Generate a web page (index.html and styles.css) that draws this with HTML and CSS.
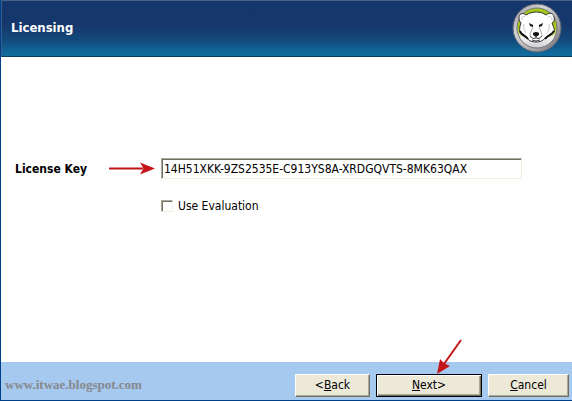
FILE: index.html
```html
<!DOCTYPE html>
<html lang="en">
<head>
    <meta charset="utf-8">
    <title>Licensing</title>
    <link rel="stylesheet" href="styles.css">
</head>
<body>
<form class="wizard">
    <header class="header">
        <h1 class="title">Licensing</h1>
        <svg class="logo" viewBox="0 0 50 50" aria-hidden="true">
            <defs>
                <linearGradient id="ring" x1="0" y1="0" x2="1" y2="1">
                    <stop offset="0" stop-color="#98969c"/>
                    <stop offset=".35" stop-color="#d4d3d6"/>
                    <stop offset=".7" stop-color="#a4a2a6"/>
                    <stop offset="1" stop-color="#67646a"/>
                </linearGradient>
                <linearGradient id="plate" x1="0" y1="0" x2="0" y2="1">
                    <stop offset=".5" stop-color="#a4c814"/>
                    <stop offset=".64" stop-color="#c8d878"/>
                    <stop offset=".74" stop-color="#f2f2f4"/>
                    <stop offset="1" stop-color="#cfcfd3"/>
                </linearGradient>
            </defs>
            <circle cx="25" cy="25" r="24" fill="url(#ring)" stroke="#5f6478" stroke-width="1"/>
            <circle cx="25" cy="25" r="20" fill="url(#plate)" stroke="#77777b" stroke-width="1"/>
            <!-- head -->
            <path d="M14 12 C10 9 7 11 7 15 C7 17 8 19 9 20 C8 23 7 26 8 29 C9 32 12 33 15 35 C17 38 20 39 24 39 C28 39 31 38 33 35 C36 33 40 32 42 29 C43 26 41 23 40 20 C42 19 43 17 42 14 C41 10 38 9 34 12 C29 8 20 8 14 12 Z" fill="#fff" stroke="#333" stroke-width="1"/>
            <path d="M8 28 C9 32 13 32 16 36 M42 28 C40 32 36 32 33 36" fill="none" stroke="#111" stroke-width="2"/>
            <path d="M10 17 C9 14 11 13 13 14 M40 17 C40 14 38 13 36 14 M12 21 C11 24 12 27 14 30 M37 21 C38 24 37 27 35 30" fill="none" stroke="#c4c4c9" stroke-width="1"/>
            <!-- eyes and muzzle -->
            <path d="M17 20 L21 22 L21 24 L18 23 Z M31 20 L27 22 L27 24 L30 23 Z" fill="#111"/>
            <path d="M21 24 C20 27 18 29 18 33 M27 24 C28 27 30 29 30 33" fill="none" stroke="#aaa" stroke-width="1"/>
            <path d="M21 30 Q24 28 27 30 L27 32 L24 34 L21 32 Z" fill="#151515"/>
            <path d="M24 33 V35 M18 33 Q21 37 24 35 Q27 37 30 33 M20 37 Q24 39 28 37" fill="none" stroke="#444" stroke-width="1"/>
        </svg>
    </header>

    <main class="content">
        <div class="key-cell">
            <label class="key-label" for="key">License Key</label>
            <svg class="arrow" viewBox="0 0 46 13" aria-hidden="true">
                <path d="M0 6.5 H34" stroke="#c4161a" stroke-width="2"/>
                <path d="M46 6.5 L31 0.5 L34.5 6.5 L31 12.5 Z" fill="#c4161a"/>
            </svg>
        </div>
        <input class="key-input" id="key" type="text" value="14H51XKK-9ZS2535E-C913YS8A-XRDGQVTS-8MK63QAX">
        <div class="evaluation">
            <input class="check" id="evaluation" type="checkbox">
            <label for="evaluation">Use Evaluation</label>
        </div>
    </main>

    <footer class="footer">
        <a class="site" href="#">www.itwae.blogspot.com</a>
        <div class="buttons">
            <button class="btn" type="button">&lt;<u>B</u>ack</button>
            <div class="next">
                <button class="btn btn-default" type="button"><u>N</u>ext&gt;</button>
                <svg class="pointer" viewBox="0 0 28 36" aria-hidden="true">
                    <path d="M25 1 L8 25" stroke="#c4161a" stroke-width="2"/>
                    <path d="M1 35 L4 20 L8.5 24.5 L14 27 Z" fill="#c4161a"/>
                </svg>
            </div>
            <button class="btn btn-cancel" type="button"><u>C</u>ancel</button>
        </div>
    </footer>
</form>
</body>
</html>
```
FILE: styles.css
```css
*{
    box-sizing: border-box;
}
body{
    margin: 0;
    font-family: "DejaVu Sans Condensed", "DejaVu Sans", sans-serif;
    font-size: 12px;
    color: #000;
}
.wizard{
    display: flex;
    flex-direction: column;
    min-height: 100vh;
    background-color: #fff;
    border-left: 1px solid #00408a;
    border-bottom: 1px solid #00408a;
}

/* top banner */
.header{
    display: flex;
    align-items: center;
    justify-content: space-between;
    height: 57px;
    padding: 0 10px 2px 9px;
    background: linear-gradient(#15366a 0%, #15386c 45%, #13497c 70%, #106b9c 96%);
    border-top: 1px solid #4a6289;
    border-left: 1px solid #395b88;
    border-bottom: 1px solid #0b3c5c;
}
.title{
    margin: 0;
    font-size: 13px;
    font-weight: bold;
    color: #fff;
}
.logo{
    width: 50px;
    height: 50px;
}

/* licence form */
.content{
    flex: 1;
    display: grid;
    grid-template-columns: 146px 1fr;
    align-content: start;
    row-gap: 20px;
    padding: 101px 50px 20px 14px;
}
.key-cell{
    display: flex;
    align-items: center;
    justify-content: space-between;
    padding-right: 6px;
}
.key-label{
    font-weight: bold;
}
.arrow{
    width: 46px;
    height: 13px;
}
.key-input{
    width: 100%;
    height: 21px;
    padding: 0 2px;
    font: inherit;
    color: #000;
    background-color: #fff;
    border: 1px solid;
    border-color: #aca899 #f1efe2 #f1efe2 #aca899;
    border-radius: 0;
    box-shadow: inset 1px 1px #716f64;
    outline: none;
}
.evaluation{
    grid-column: 2;
    display: flex;
    align-items: center;
    gap: 5px;
}
.check{
    appearance: none;
    width: 12px;
    height: 12px;
    margin: 0;
    background-color: #fff;
    border: 1px solid;
    border-color: #aca899 #f1efe2 #f1efe2 #aca899;
    box-shadow: inset 1px 1px #716f64;
}
.check:checked{
    background-color: #716f64;
}

/* bottom bar */
.footer{
    display: flex;
    align-items: center;
    justify-content: space-between;
    height: 38px;
    padding: 8px 3px 0 4px;
    background-color: #a6c9ef;
}
.site{
    font-family: "Liberation Serif", serif;
    font-size: 13px;
    font-weight: bold;
    color: #85888e;
    text-decoration: none;
}
.buttons{
    display: flex;
    gap: 6px;
}
.btn{
    width: 75px;
    height: 23px;
    padding: 0;
    font: inherit;
    color: #000;
    background-color: #ece9d8;
    border: 1px solid;
    border-color: #fff #716f64 #716f64 #fff;
    border-radius: 0;
    box-shadow: inset -1px -1px #aca899;
    cursor: pointer;
}
.next{
    position: relative;
}
.btn-default{
    width: 106px;
    border-color: #000;
    box-shadow: inset 1px 1px #fff, inset -1px -1px #716f64, inset -2px -2px #aca899;
}
.btn-cancel{
    width: 81px;
}
.pointer{
    position: absolute;
    left: 60px;
    bottom: 22px;
    width: 28px;
    height: 36px;
    pointer-events: none;
}
```
